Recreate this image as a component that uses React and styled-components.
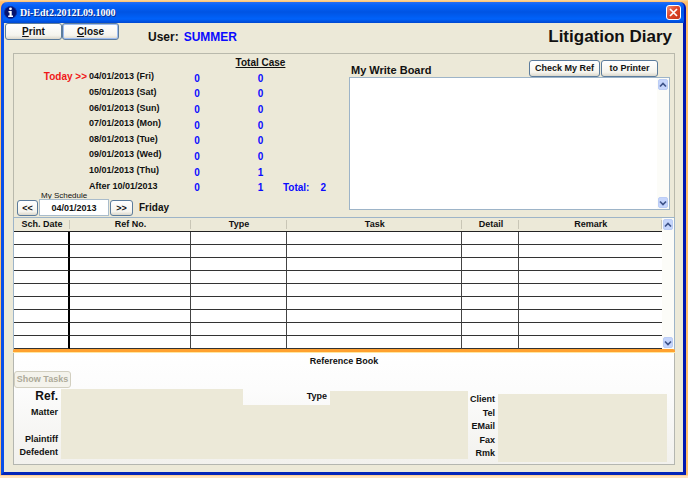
import React from "react";
import styled, { createGlobalStyle } from "styled-components";

const GlobalStyle = createGlobalStyle`
  *, *::before, *::after { box-sizing: border-box; }
  body {
    margin: 0;
    background: #ffbe6b;
    font: bold 9px/12px "Liberation Sans", Arial, sans-serif;
    color: #111;
  }
  button, input, textarea { font: inherit; color: inherit; }
`;

const Desktop = styled.div`
  display: flex;
  min-height: 100vh;
  padding: 2px 2px 3px 1px;
  background: linear-gradient(to bottom, #fbd9a0, #ffbe6b 2px, #ffbe6b calc(100% - 3px), #ffe3c0 calc(100% - 2px));
`;

const Window = styled.main`
  display: flex;
  flex: 1;
  flex-direction: column;
  min-width: 0;
  border: 3px solid #0a4fe8;
  border-top: 0;
  border-right-color: #0218b0;
  border-bottom-color: #0425b8;
  border-radius: 6px 6px 0 0;
  background: #ece9d8;
`;

const TitleBar = styled.header`
  display: flex;
  align-items: center;
  gap: 3px;
  height: 21px;
  padding: 0 3px 0 1px;
  margin: 0 -1px;
  border-radius: 5px 5px 0 0;
  background: linear-gradient(to bottom, #2a6ef0, #0563fb 3px, #0054e3 10px, #0062fa 17px, #0047d0);
`;

const WindowTitle = styled.span`
  flex: 1;
  font: bold 10px/14px "Liberation Serif", "Times New Roman", serif;
  color: #fff;
  text-shadow: 1px 1px 0 #0b2f8f;
`;

const CloseBox = styled.button`
  display: grid;
  place-items: center;
  width: 15px;
  height: 15px;
  padding: 0;
  border: 1px solid #fff;
  border-radius: 3px;
  background: linear-gradient(135deg, #ee9078, #e0482a 45%, #c4341a);
`;

const Toolbar = styled.div`
  display: flex;
  align-items: flex-start;
  height: 30px;
  padding: 0 11px 0 1px;
`;

const Button = styled.button`
  width: ${(p) => p.$width || 57}px;
  height: 17px;
  padding: 0;
  border: 1px solid #5c7c9c;
  border-radius: 3px;
  background: linear-gradient(to bottom, #fff, #f5f4ee 75%, #dcd8cc);
  box-shadow: ${(p) => (p.$focused ? "inset 0 0 0 1px #9dbcf0" : "none")};
  font-size: ${(p) => (p.$large ? 10 : 9)}px;
  line-height: 13px;
  white-space: nowrap;
  &:disabled {
    border: 1px solid #d2cfc0;
    background: #f4f3ec;
    color: #adaa99;
  }
`;

const User = styled.div`
  padding: 6px 0 0 29px;
  font-size: 12px;
  line-height: 16px;
`;

const UserName = styled.span`
  margin-left: 5px;
  color: #0a0aff;
`;

const PageTitle = styled.h1`
  margin: 3px 0 0 auto;
  font-size: 17px;
  line-height: 22px;
`;

const GroupBox = styled.div`
  display: flex;
  flex: 1;
  flex-direction: column;
  margin: 0 8px 7px 9px;
`;

const Overview = styled.section`
  display: flex;
  height: 164px;
  border: 1px solid #b9b9ac;
  border-bottom: 0;
`;

const Summary = styled.div`
  display: flex;
  flex: none;
  flex-direction: column;
  width: 335px;
`;

const SummaryTable = styled.table`
  width: 312px;
  height: 142px;
  border-collapse: collapse;
  table-layout: fixed;
  td, th { padding: 0; }
`;

const CaseHead = styled.th`
  height: 17px;
  padding-top: 3px;
  font-size: 10px;
  text-decoration: underline;
  white-space: nowrap;
`;

const DayCell = styled.td`
  text-align: left;
  white-space: nowrap;
`;

const DayText = styled.span`
  display: block;
  padding: 0 2px 4px 0;
  text-align: ${(p) => (p.$today ? "right" : "left")};
  color: ${(p) => (p.$today ? "#f01818" : "#111")};
  font-size: ${(p) => (p.$today ? 10 : 9)}px;
  line-height: 11px;
`;

const CountCell = styled.td`
  color: #0a0aff;
  font-size: 10px;
  text-align: center;
`;

const TotalLine = styled.span`
  display: flex;
  justify-content: flex-end;
  gap: 11px;
`;

const Schedule = styled.div`
  display: grid;
  grid-template-columns: 21px 70px 23px auto;
  grid-template-rows: 4px 16px;
  justify-content: start;
  column-gap: 1px;
  padding-left: 3px;
`;

const ScheduleLabel = styled.label`
  grid-column: 2;
  align-self: end;
  padding-left: 2px;
  font-size: 8px;
  line-height: 9px;
  font-weight: normal;
  white-space: nowrap;
`;

const NavButton = styled(Button)`
  grid-row: 2;
  width: auto;
  height: 16px;
`;

const DateInput = styled.input`
  grid-row: 2;
  width: 70px;
  height: 17px;
  align-self: end;
  padding: 0;
  border: 1px solid #a9bccb;
  background: #fff;
  text-align: center;
`;

const DayName = styled.span`
  grid-row: 2;
  padding-left: 5px;
  font-size: 10px;
  line-height: 15px;
`;

const WriteBoard = styled.div`
  display: flex;
  flex: 1;
  flex-direction: column;
  min-width: 0;
  padding: 6px 4px 7px 0;
`;

const BoardBar = styled.div`
  display: flex;
  gap: 1px;
  height: 17px;
  padding-right: 12px;
`;

const BoardLabel = styled.label`
  flex: 1;
  padding: 3px 0 0 2px;
  font-size: 11px;
  line-height: 14px;
`;

const BoardFrame = styled.div`
  display: flex;
  flex: 1;
  min-height: 0;
  border: 1px solid #9db4c8;
  background: #fff;
`;

const BoardText = styled.textarea`
  flex: 1;
  min-width: 0;
  padding: 2px;
  border: 0;
  resize: none;
  outline: none;
  background: transparent;
`;

const ScrollTrack = styled.div`
  display: flex;
  flex: none;
  flex-direction: column;
  justify-content: space-between;
  width: 12px;
  padding: 1px;
  background: #fcfcf8;
`;

const ScrollButton = styled.button`
  display: grid;
  place-items: center;
  width: 10px;
  height: 11px;
  padding: 0;
  border: 1px solid #bccdf5;
  border-radius: 2px;
  background: #c5d5fc;
`;

const Tasks = styled.section`
  display: flex;
  border: 1px solid #9db4c8;
  border-bottom: 0;
  background: #fff;
`;

const TaskTable = styled.table`
  flex: 1;
  width: 100%;
  border-collapse: separate;
  border-spacing: 0;
  table-layout: fixed;
`;

const TaskHead = styled.th`
  height: 14px;
  padding: 0;
  border-bottom: 1px solid #222;
  background: linear-gradient(#c9c6b6, #c9c6b6) right center / 1px 9px no-repeat #ece9d8;
  line-height: 13px;
`;

const TaskCell = styled.td`
  height: 13px;
  padding: 0;
  border-bottom: 1px solid #333;
  border-right: ${(p) => (p.$first ? "2px solid #000" : p.$last ? "0" : "1px solid #444")};
`;

const Reference = styled.section`
  display: flex;
  flex: 1;
  flex-direction: column;
  min-height: 116px;
  border: 1px solid #b4b6b0;
  border-top: 0;
  background: linear-gradient(to bottom, #fff, #fcfcfc 35%, #f2f1ed);
`;

const ReferenceTitle = styled.h2`
  margin: 0 -1px;
  height: 22px;
  padding-top: 2px;
  border-top: 3px solid #ffa12f;
  border-radius: 2px 2px 0 0;
  box-shadow: inset 0 1px 0 #ffe6a0;
  font-size: 9px;
  line-height: 14px;
  text-align: center;
`;

const FormArea = styled.div`
  display: flex;
  padding-right: 7px;
  margin-top: 1px;
`;

const MatterForm = styled.div`
  display: grid;
  flex: 1;
  min-width: 0;
  height: 70px;
  grid-template-columns: 47px 182px 87px 1fr;
  grid-template-rows: 16px 27px 13px 14px;
`;

const FieldLabel = styled.label`
  padding-right: 3px;
  text-align: right;
  font-size: ${(p) => (p.$large ? 12 : 9)}px;
  line-height: 14px;
  white-space: nowrap;
`;

const ContactForm = styled.div`
  display: grid;
  width: 199px;
  height: 68px;
  margin-top: 5px;
  grid-template-columns: 30px 1fr;
  grid-template-rows: repeat(5, 1fr);
  ${FieldLabel} { line-height: 11px; }
`;

const Field = styled.input`
  width: 100%;
  min-width: 0;
  height: 100%;
  padding: 0 3px;
  border: 0;
  outline: none;
  background: #ece9d8;
  grid-column: ${(p) => (p.$wide ? "2 / -1" : "auto")};
`;

const TypeField = styled(Field)`
  align-self: end;
  height: 14px;
`;

const days = [
  ["04/01/2013 (Fri)", 0, 0],
  ["05/01/2013 (Sat)", 0, 0],
  ["06/01/2013 (Sun)", 0, 0],
  ["07/01/2013 (Mon)", 0, 0],
  ["08/01/2013 (Tue)", 0, 0],
  ["09/01/2013 (Wed)", 0, 0],
  ["10/01/2013 (Thu)", 0, 1],
  ["After 10/01/2013", 0, 1],
];

const columns = ["Sch. Date", "Ref No.", "Type", "Task", "Detail", "Remark"];
const rows = Array.from({ length: 9 }, (_, i) => i);
const contacts = ["Client", "Tel", "EMail", "Fax", "Rmk"];

function InfoIcon() {
  return (
    <svg width="13" height="13" viewBox="0 0 13 13" aria-hidden="true">
      <circle cx="6.5" cy="6.5" r="6" fill="#06146e" stroke="#0a2a9c" />
      <circle cx="6.5" cy="2.8" r="1.4" fill="#fff" />
      <path d="M4.500 5h3.200v4.600h1.300v1.400h-4.800v-1.400h1.300v-3.200h-1z" fill="#fff" />
    </svg>
  );
}

function Scrollbar({ name }) {
  return (
    <ScrollTrack>
      <ScrollButton aria-label={`Scroll ${name} up`}>
        <svg width="8" height="6" viewBox="0 0 8 6"><path d="M1 4.500L4 1.500l3 3" fill="none" stroke="#3d5288" strokeWidth="1.700" /></svg>
      </ScrollButton>
      <ScrollButton aria-label={`Scroll ${name} down`}>
        <svg width="8" height="6" viewBox="0 0 8 6"><path d="M1 1.500l3 3 3-3" fill="none" stroke="#3d5288" strokeWidth="1.700" /></svg>
      </ScrollButton>
    </ScrollTrack>
  );
}

export default function App() {
  return (
    <>
      <GlobalStyle />
      <Desktop>
        <Window>
          <TitleBar>
            <InfoIcon />
            <WindowTitle>Di-Edt2.2012L09.1000</WindowTitle>
            <CloseBox aria-label="Close window">
              <svg width="9" height="9" viewBox="0 0 9 9"><path d="M1 1l7 7M8 1L1 8" stroke="#fff" strokeWidth="1.700" /></svg>
            </CloseBox>
          </TitleBar>

          <Toolbar>
            <Button $large><u>P</u>rint</Button>
            <Button $large $focused><u>C</u>lose</Button>
            <User>User:<UserName>SUMMER</UserName></User>
            <PageTitle>Litigation Diary</PageTitle>
          </Toolbar>

          <GroupBox>
            <Overview>
              <Summary>
                <SummaryTable>
                  <colgroup>
                    <col width="75" />
                    <col width="95" />
                    <col width="26" />
                    <col width="101" />
                    <col width="15" />
                  </colgroup>
                  <thead>
                    <tr>
                      <td colSpan={3} />
                      <CaseHead>Total Case</CaseHead>
                      <td />
                    </tr>
                  </thead>
                  <tbody>
                    {days.map(([day, mine, total], i) => (
                      <tr key={day}>
                        <DayCell>{i === 0 && <DayText $today>Today &gt;&gt;</DayText>}</DayCell>
                        <DayCell><DayText>{day}</DayText></DayCell>
                        <CountCell>{mine}</CountCell>
                        <CountCell>{total}</CountCell>
                        <CountCell>
                          {i === days.length - 1 && (
                            <TotalLine><span>Total:</span><span>2</span></TotalLine>
                          )}
                        </CountCell>
                      </tr>
                    ))}
                  </tbody>
                </SummaryTable>
                <Schedule>
                  <ScheduleLabel htmlFor="schedule">My Schedule</ScheduleLabel>
                  <NavButton aria-label="Previous day">&lt;&lt;</NavButton>
                  <DateInput id="schedule" defaultValue="04/01/2013" />
                  <NavButton aria-label="Next day">&gt;&gt;</NavButton>
                  <DayName>Friday</DayName>
                </Schedule>
              </Summary>

              <WriteBoard>
                <BoardBar>
                  <BoardLabel htmlFor="board">My Write Board</BoardLabel>
                  <Button $width={71}>Check My Ref</Button>
                  <Button>to Printer</Button>
                </BoardBar>
                <BoardFrame>
                  <BoardText id="board" />
                  <Scrollbar name="board" />
                </BoardFrame>
              </WriteBoard>
            </Overview>

            <Tasks>
              <TaskTable>
                <colgroup>
                  <col width="56" />
                  <col width="121" />
                  <col width="96" />
                  <col />
                  <col width="57" />
                  <col width="22%" />
                </colgroup>
                <thead>
                  <tr>{columns.map((c) => <TaskHead key={c}>{c}</TaskHead>)}</tr>
                </thead>
                <tbody>
                  {rows.map((r) => (
                    <tr key={r}>
                      {columns.map((c, i) => (
                        <TaskCell key={c} $first={i === 0} $last={i === columns.length - 1} />
                      ))}
                    </tr>
                  ))}
                </tbody>
              </TaskTable>
              <Scrollbar name="tasks" />
            </Tasks>

            <Reference>
              <ReferenceTitle>Reference Book</ReferenceTitle>
              <Button disabled>Show Tasks</Button>
              <FormArea>
                <MatterForm>
                  <FieldLabel $large htmlFor="ref">Ref.</FieldLabel>
                  <Field id="ref" readOnly />
                  <FieldLabel htmlFor="type">Type</FieldLabel>
                  <TypeField id="type" readOnly />
                  <FieldLabel htmlFor="matter">Matter</FieldLabel>
                  <Field $wide id="matter" readOnly />
                  <FieldLabel htmlFor="plaintiff">Plaintiff</FieldLabel>
                  <Field $wide id="plaintiff" readOnly />
                  <FieldLabel htmlFor="defendant">Defedent</FieldLabel>
                  <Field $wide id="defendant" readOnly />
                </MatterForm>
                <ContactForm>
                  {contacts.map((c) => (
                    <React.Fragment key={c}>
                      <FieldLabel htmlFor={c}>{c}</FieldLabel>
                      <Field id={c} readOnly />
                    </React.Fragment>
                  ))}
                </ContactForm>
              </FormArea>
            </Reference>
          </GroupBox>
        </Window>
      </Desktop>
    </>
  );
}
